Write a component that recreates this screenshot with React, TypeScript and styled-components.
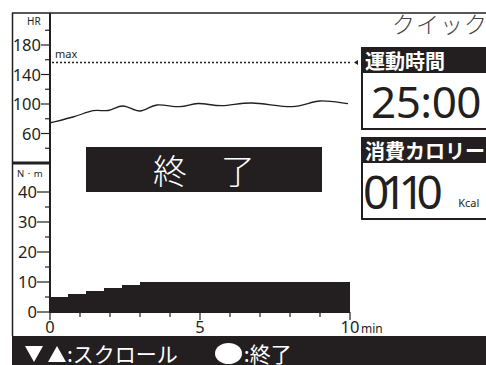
import styled, { createGlobalStyle } from 'styled-components';

const INK = '#231f20';
const JP = '"Noto Sans CJK JP", "Noto Sans", sans-serif';
const NUM = '"Noto Sans", "DejaVu Sans", sans-serif';

const GlobalStyle = createGlobalStyle`
  html, body {
    margin: 0;
    padding: 0;
    background: #fff;
  }
`;

const Screen = styled.div`
  width: 486px;
  height: 365px;
  overflow: hidden;
  display: flex;
  flex-direction: column;
  background: #fff;
  color: ${INK};
  font-family: ${JP};
`;

const Stage = styled.div`
  position: relative;
  display: grid;
  grid-template-areas: 'stack';
  height: 336px;
`;

const ChartSvg = styled.svg`
  grid-area: stack;
  display: block;
  overflow: visible;
`;

const SideColumn = styled.div`
  grid-area: stack;
  justify-self: end;
  width: 125px;
  padding-top: 12px;
  display: flex;
  flex-direction: column;
  gap: 7px;
`;

const ModeTitle = styled.div`
  height: 28px;
  padding-left: 31px;
  font-size: 23px;
  font-weight: 300;
  line-height: 23px;
  color: #4a4748;
  white-space: nowrap;
  letter-spacing: 1px;
`;

const InfoBox = styled.div`
  height: 83px;
  box-sizing: border-box;
  border: 2px solid ${INK};
  border-right: none;
  display: flex;
  flex-direction: column;
`;

const InfoHeader = styled.div`
  height: 24px;
  background: ${INK};
  color: #fff;
  font-size: 20px;
  font-weight: 700;
  line-height: 24px;
  padding-left: 2px;
  white-space: nowrap;
  overflow: hidden;
`;

const InfoBody = styled.div<{ $indent: number }>`
  flex: 1;
  display: flex;
  align-items: center;
  padding-left: ${(p) => p.$indent}px;
  white-space: nowrap;
`;

const BigTime = styled.span`
  font-family: ${NUM};
  font-size: 44px;
  line-height: 1;
  letter-spacing: -0.5px;
`;

const BigCount = styled.span`
  font-family: ${NUM};
  font-size: 46px;
  line-height: 1;
  letter-spacing: -8.5px;
`;

const Unit = styled.span`
  align-self: flex-end;
  margin: 0 0 8px 24px;
  font-family: ${NUM};
  font-size: 11px;
`;

const EndBanner = styled.div`
  position: absolute;
  left: 86px;
  top: 147px;
  width: 236px;
  height: 45px;
  background: ${INK};
  color: #fff;
  display: flex;
  align-items: center;
  justify-content: center;
  font-size: 34px;
  font-weight: 300;
  line-height: 1;
`;

const Footer = styled.div`
  height: 29px;
  margin-left: 12px;
  background: ${INK};
  color: #fff;
  display: flex;
  align-items: center;
  padding: 5px 0 0 13px;
  box-sizing: border-box;
  font-size: 21px;
  white-space: nowrap;
`;

const FooterItem = styled.div<{ $gap?: number }>`
  display: flex;
  align-items: center;
  margin-right: ${(p) => p.$gap ?? 0}px;
`;

const ButtonDot = styled.span`
  display: inline-block;
  width: 27px;
  height: 21px;
  border-radius: 50%;
  background: #fff;
  margin-right: 2px;
`;

// heart-rate scale: 180 -> y45, 140 -> y74.5
const hrY = (v: number) => 45 + (180 - v) * 0.7375;
// torque scale: 0 -> y312, 10 N·m per 30px
const nmY = (v: number) => 312 - v * 3;
const minX = (m: number) => 50 + m * 30;

const hrPoints: [number, number][] = [
  [50, 123], [73, 117], [93, 110.7], [108, 110.5], [123, 106], [140, 111],
  [157, 105], [180, 106.7], [198, 103.5], [222, 105.7], [252, 103],
  [292, 106.7], [320, 101], [348, 103.7],
];

const smoothPath = (pts: [number, number][]) => {
  let d = `M${pts[0][0]},${pts[0][1]}`;
  for (let i = 0; i < pts.length - 1; i++) {
    const p0 = pts[i - 1] ?? pts[i];
    const p1 = pts[i];
    const p2 = pts[i + 1];
    const p3 = pts[i + 2] ?? p2;
    const c1x = p1[0] + (p2[0] - p0[0]) / 6;
    const c1y = p1[1] + (p2[1] - p0[1]) / 6;
    const c2x = p2[0] - (p3[0] - p1[0]) / 6;
    const c2y = p2[1] - (p3[1] - p1[1]) / 6;
    d += ` C${c1x.toFixed(1)},${c1y.toFixed(1)} ${c2x.toFixed(1)},${c2y.toFixed(1)} ${p2[0]},${p2[1]}`;
  }
  return d;
};

// torque rises 1 N·m every 0.6 min, then holds at 10
const torqueSteps = [5, 6, 7, 8, 9, 10];

const torquePath = () => {
  let d = `M50,312`;
  torqueSteps.forEach((v, i) => {
    const x0 = 50 + i * 18;
    const x1 = i === torqueSteps.length - 1 ? 350 : x0 + 18;
    d += ` L${x0},${nmY(v)} L${x1},${nmY(v)}`;
  });
  return d + ' L350,312 Z';
};

const Chart = () => {
  const hrTicks = [200, 180, 160, 140, 120, 100, 80, 60, 40];
  const hrLabels = [180, 140, 100, 60];
  const nmTicks = [40, 35, 30, 25, 20, 15, 10, 5, 0];
  const nmLabels = [40, 30, 20, 10, 0];
  const minutes = Array.from({ length: 11 }, (_, i) => i);

  return (
    <ChartSvg width="486" height="336" viewBox="0 0 486 336">
      {/* frame */}
      <line x1="12" y1="13" x2="486" y2="13" stroke={INK} strokeWidth="1.5" />
      <line x1="12.5" y1="13" x2="12.5" y2="336" stroke={INK} strokeWidth="1.5" />
      <line x1="50" y1="13" x2="50" y2="313" stroke={INK} strokeWidth="2" />
      <line x1="12" y1="163" x2="50" y2="163" stroke={INK} strokeWidth="3" />

      {/* HR axis */}
      <text x="27" y="25" fontFamily={NUM} fontSize="10" fill={INK}>HR</text>
      {hrTicks.map((v) => (
        <line
          key={v}
          x1={hrLabels.includes(v) ? 41 : 45}
          x2="50"
          y1={hrY(v)}
          y2={hrY(v)}
          stroke={INK}
          strokeWidth="1.2"
        />
      ))}
      {hrLabels.map((v) => (
        <text key={v} x="41" y={hrY(v) + 6} textAnchor="end" fontFamily={NUM} fontSize="16.5" fill={INK}>
          {v}
        </text>
      ))}

      {/* max line */}
      <text x="55" y="58" fontFamily={NUM} fontSize="11" fill={INK}>max</text>
      <line x1="52" y1="62.5" x2="352" y2="62.5" stroke={INK} strokeWidth="1.4" strokeDasharray="2 2" />
      <path d="M354,62.5 L358,60 L358,65 Z" fill={INK} />

      {/* HR curve */}
      <path d={smoothPath(hrPoints)} fill="none" stroke={INK} strokeWidth="1.3" />

      {/* torque axis */}
      <text x="17" y="177" fontFamily={NUM} fontSize="9.5" fill={INK} letterSpacing="0.5">N · m</text>
      {nmTicks.map((v) => (
        <line
          key={v}
          x1={nmLabels.includes(v) ? 37 : 45}
          x2="50"
          y1={nmY(v)}
          y2={nmY(v)}
          stroke={INK}
          strokeWidth="1.2"
        />
      ))}
      {nmLabels.map((v) => (
        <text key={v} x="37" y={nmY(v) + 6} textAnchor="end" fontFamily={NUM} fontSize="16.5" fill={INK}>
          {v}
        </text>
      ))}

      {/* torque bars */}
      <path d={torquePath()} fill={INK} />
      <line x1="50" y1="312.5" x2="350" y2="312.5" stroke={INK} strokeWidth="1" />

      {/* time axis */}
      {minutes.map((m) => (
        <line
          key={m}
          x1={minX(m)}
          x2={minX(m)}
          y1="312"
          y2={m % 5 === 0 ? 320 : 317}
          stroke={INK}
          strokeWidth="1.2"
        />
      ))}
      <text x={minX(0)} y="333" textAnchor="middle" fontFamily={NUM} fontSize="16.5" fill={INK}>0</text>
      <text x={minX(5)} y="333" textAnchor="middle" fontFamily={NUM} fontSize="16.5" fill={INK}>5</text>
      <text x={minX(10)} y="333" textAnchor="middle" fontFamily={NUM} fontSize="16.5" fill={INK}>10</text>
      <text x="361" y="333" fontFamily={NUM} fontSize="12" fill={INK}>min</text>
    </ChartSvg>
  );
};

const ScrollArrows = () => (
  <svg width="42" height="17" viewBox="0 0 42 17">
    <path d="M0,1 L18,1 L9,17 Z" fill="#fff" />
    <path d="M23,17 L41,17 L32,1 Z" fill="#fff" />
  </svg>
);

export default function App() {
  return (
    <Screen>
      <GlobalStyle />
      <Stage>
        <Chart />
        <SideColumn>
          <ModeTitle>クイック</ModeTitle>
          <InfoBox>
            <InfoHeader>運動時間</InfoHeader>
            <InfoBody $indent={8}>
              <BigTime>25:00</BigTime>
            </InfoBody>
          </InfoBox>
          <InfoBox>
            <InfoHeader>消費カロリー</InfoHeader>
            <InfoBody $indent={0}>
              <BigCount>0110</BigCount>
              <Unit>Kcal</Unit>
            </InfoBody>
          </InfoBox>
        </SideColumn>
        <EndBanner>終　了</EndBanner>
      </Stage>
      <Footer>
        <FooterItem>
          <ScrollArrows />
        </FooterItem>
        <FooterItem $gap={37}>:スクロール</FooterItem>
        <FooterItem>
          <ButtonDot />
          :終了
        </FooterItem>
      </Footer>
    </Screen>
  );
}
